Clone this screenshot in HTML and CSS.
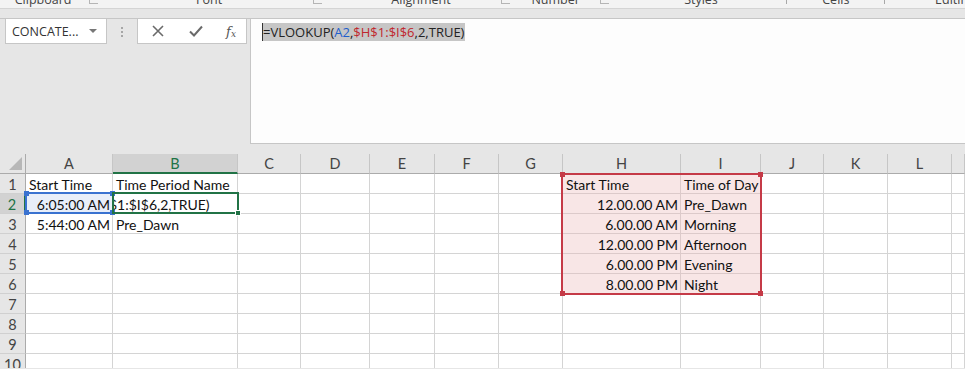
FILE: index.html
```html
<!DOCTYPE html>
<html lang="en">
<head>
	<meta charset="UTF-8">
	<title>Book1 - Excel</title>
	<link rel="stylesheet" href="styles.css">
</head>
<body>

	<!-- ribbon group labels (only the bottom edge shows) -->
	<div class="ribbon">
		<div class="grp g-clip"><span class="lbl">Clipboard</span><span class="launch"></span></div>
		<div class="grp g-font"><span class="lbl">Font</span><span class="launch"></span></div>
		<div class="grp g-align"><span class="lbl">Alignment</span><span class="launch"></span></div>
		<div class="grp g-num"><span class="lbl">Number</span><span class="launch"></span></div>
		<div class="grp g-styles sep"><span class="lbl">Styles</span></div>
		<div class="grp g-cells sep"><span class="lbl">Cells</span></div>
		<div class="grp g-edit"><span class="lbl">Editing</span></div>
	</div>
	<div class="band"></div>

	<!-- name box + formula bar -->
	<div class="fbar">
		<div class="namebox">
			<span>CONCATE...</span>
			<span class="arrow"></span>
		</div>
		<div class="dots"><i></i><i></i><i></i></div>
		<div class="fbtns">
			<svg width="14" height="14" viewBox="0 0 14 14"><path d="M2 2 L12 12 M12 2 L2 12" stroke="#6a6a6a" stroke-width="1.6" fill="none"/></svg>
			<svg width="16" height="14" viewBox="0 0 16 14"><path d="M2 7.5 L6 11.5 L14 2.5" stroke="#6a6a6a" stroke-width="2" fill="none"/></svg>
			<span class="fx">f<sub>x</sub></span>
		</div>
		<div class="finput">
			<div class="ftext">=VLOOKUP(<span class="blue">A2</span>,<span class="red">$H$1:$I$6</span>,2,TRUE)</div>
		</div>
	</div>

	<!-- worksheet -->
	<div class="sheet">
		<div class="grid">
			<div class="h corner"></div><div class="h">A</div><div class="h sel">B</div><div class="h">C</div><div class="h">D</div><div class="h">E</div><div class="h">F</div><div class="h">G</div><div class="h">H</div><div class="h">I</div><div class="h">J</div><div class="h">K</div><div class="h">L</div><div class="h"></div>

			<div class="rh">1</div><div class="c">Start Time</div><div class="c">Time Period Name</div><div class="c"></div><div class="c"></div><div class="c"></div><div class="c"></div><div class="c"></div><div class="c ref">Start Time</div><div class="c ref">Time of Day</div><div class="c"></div><div class="c"></div><div class="c"></div><div class="c"></div>

			<div class="rh sel">2</div><div class="c num a2">6:05:00 AM</div><div class="c edit"><span>$1:$I$6,2,TRUE)</span></div><div class="c"></div><div class="c"></div><div class="c"></div><div class="c"></div><div class="c"></div><div class="c ref num">12.00.00 AM</div><div class="c ref">Pre_Dawn</div><div class="c"></div><div class="c"></div><div class="c"></div><div class="c"></div>

			<div class="rh">3</div><div class="c num">5:44:00 AM</div><div class="c">Pre_Dawn</div><div class="c"></div><div class="c"></div><div class="c"></div><div class="c"></div><div class="c"></div><div class="c ref num">6.00.00 AM</div><div class="c ref">Morning</div><div class="c"></div><div class="c"></div><div class="c"></div><div class="c"></div>

			<div class="rh">4</div><div class="c"></div><div class="c"></div><div class="c"></div><div class="c"></div><div class="c"></div><div class="c"></div><div class="c"></div><div class="c ref num">12.00.00 PM</div><div class="c ref">Afternoon</div><div class="c"></div><div class="c"></div><div class="c"></div><div class="c"></div>

			<div class="rh">5</div><div class="c"></div><div class="c"></div><div class="c"></div><div class="c"></div><div class="c"></div><div class="c"></div><div class="c"></div><div class="c ref num">6.00.00 PM</div><div class="c ref">Evening</div><div class="c"></div><div class="c"></div><div class="c"></div><div class="c"></div>

			<div class="rh">6</div><div class="c"></div><div class="c"></div><div class="c"></div><div class="c"></div><div class="c"></div><div class="c"></div><div class="c"></div><div class="c ref num">8.00.00 PM</div><div class="c ref">Night</div><div class="c"></div><div class="c"></div><div class="c"></div><div class="c"></div>

			<div class="rh">7</div><div class="c"></div><div class="c"></div><div class="c"></div><div class="c"></div><div class="c"></div><div class="c"></div><div class="c"></div><div class="c"></div><div class="c"></div><div class="c"></div><div class="c"></div><div class="c"></div><div class="c"></div>

			<div class="rh">8</div><div class="c"></div><div class="c"></div><div class="c"></div><div class="c"></div><div class="c"></div><div class="c"></div><div class="c"></div><div class="c"></div><div class="c"></div><div class="c"></div><div class="c"></div><div class="c"></div><div class="c"></div>

			<div class="rh">9</div><div class="c"></div><div class="c"></div><div class="c"></div><div class="c"></div><div class="c"></div><div class="c"></div><div class="c"></div><div class="c"></div><div class="c"></div><div class="c"></div><div class="c"></div><div class="c"></div><div class="c"></div>

			<div class="rh">10</div><div class="c"></div><div class="c"></div><div class="c"></div><div class="c"></div><div class="c"></div><div class="c"></div><div class="c"></div><div class="c"></div><div class="c"></div><div class="c"></div><div class="c"></div><div class="c"></div><div class="c"></div>
		</div>

		<!-- reference highlights and active cell, drawn over the grid -->
		<div class="box box-blue"><i class="k tl"></i><i class="k tr"></i><i class="k bl"></i><i class="k br"></i></div>
		<div class="box box-green"><i class="fill"></i></div>
		<div class="box box-red"><i class="k tl"></i><i class="k tr"></i><i class="k bl"></i><i class="k br"></i></div>
	</div>

</body>
</html>
```

FILE: styles.css
```css
*{
	margin: 0;
	padding: 0;
	box-sizing: border-box;
}

body{
	width: 965px;
	height: 369px;
	overflow: hidden;
	background: #e6e6e6;
	font-family: "Open Sans", "Noto Sans", sans-serif;
}

/* ribbon strip */
.ribbon{
	height: 9px;
	background: #f3f3f3;
	border-bottom: 1px solid #d4d4d4;
	display: flex;
	overflow: hidden;
}

.grp{
	position: relative;
	display: flex;
	justify-content: center;
	font-size: 12.5px;
	color: #444;
	line-height: 16px;
	margin-top: -8px;
}

.g-clip{ width: 107px; }
.g-font{ width: 230px; }
.g-align{ width: 193px; }
.g-num{ width: 102px; }
.g-styles{ width: 176px; }
.g-cells{ width: 101px; }
.g-edit{ width: 80px; }

.g-font .lbl{ margin-left: -14px; }
.g-clip .lbl{ margin-left: -18px; }
.g-align .lbl{ margin-left: -2px; }
.g-num .lbl{ margin-left: -20px; }
.g-edit .lbl{ margin-left: 60px; }

.launch{
	position: absolute;
	right: 6px;
	bottom: 4px;
	width: 9px;
	height: 9px;
	border-left: 1px solid #b5b5b5;
	border-bottom: 1px solid #b5b5b5;
}

.sep::after{
	content: '';
	position: absolute;
	right: 0;
	bottom: 4px;
	width: 1px;
	height: 6px;
	background: #a8a8a8;
}

.band{
	height: 10px;
	border-bottom: 1px solid #c6c6c6;
}

/* formula bar */
.fbar{
	display: flex;
	align-items: flex-start;
	height: 135px;
}

.namebox{
	margin-left: 5px;
	width: 102px;
	height: 25px;
	background: #fff;
	border: 1px solid #c6c6c6;
	border-top: none;
	display: flex;
	align-items: center;
	padding-left: 6px;
	font-size: 12.5px;
	color: #333;
}

.arrow{
	margin-left: 11px;
	width: 0;
	height: 0;
	border-left: 4px solid transparent;
	border-right: 4px solid transparent;
	border-top: 4px solid #777;
}

.dots{
	width: 30px;
	height: 25px;
	display: flex;
	flex-direction: column;
	align-items: center;
	justify-content: center;
	gap: 2px;
}

.dots i{
	width: 2px;
	height: 2px;
	background: #a6a6a6;
}

.fbtns{
	width: 110px;
	height: 25px;
	background: #fff;
	border: 1px solid #c6c6c6;
	border-top: none;
	display: flex;
	align-items: center;
	justify-content: space-between;
	padding: 0 10px 0 13px;
}

.fx{
	font-family: "DejaVu Serif", serif;
	font-style: italic;
	font-size: 13px;
	color: #555;
}

.fx sub{
	font-size: 9px;
	vertical-align: -1px;
}

.finput{
	margin-left: 3px;
	flex: 1;
	height: 125px;
	background: #fdfdfd;
	border-left: 1px solid #c6c6c6;
	border-bottom: 1px solid #c6c6c6;
	padding: 4px 0 0 11px;
}

.ftext{
	width: fit-content;
	height: 18px;
	line-height: 18px;
	padding-right: 1px;
	background: #c6c6c6;
	border-left: 1px solid #333;
	font-size: 13px;
	color: #222;
}

.blue{ color: #1f5fcc; }
.red{ color: #c0272d; }

/* worksheet */
.sheet{
	position: relative;
	height: 214px;
	overflow: hidden;
	background: #fff;
}

.grid{
	display: grid;
	grid-template-columns: 26px 87px 125px 63px 69px 65px 64px 64px 118px 80px 63px 64px 64px 1fr;
	grid-auto-rows: 20px;
	font-family: "Lato", "Carlito", sans-serif;
}

.h{
	background: #e6e6e6;
	border-right: 1px solid #c6c6c6;
	border-bottom: 1px solid #ababab;
	text-align: center;
	font-size: 14.5px;
	line-height: 20px;
	color: #444;
}

.h.sel{
	background: #d2d2d2;
	border-bottom: 2px solid #217346;
	color: #217346;
}

.corner{
	position: relative;
	border-right-color: #ababab;
}

.corner::after{
	content: '';
	position: absolute;
	right: 3px;
	bottom: 3px;
	border-left: 13px solid transparent;
	border-bottom: 13px solid #b7b7b7;
}

.rh{
	background: #e6e6e6;
	border-right: 1px solid #ababab;
	border-bottom: 1px solid #d0d0d0;
	text-align: center;
	font-size: 14.5px;
	line-height: 21px;
	color: #444;
}

.rh.sel{
	background: #d2d2d2;
	border-right: 2px solid #217346;
	color: #217346;
}

.c{
	border-right: 1px solid #d4d4d4;
	border-bottom: 1px solid #d4d4d4;
	padding: 0 2px 0 3px;
	font-size: 14px;
	line-height: 21px;
	color: #111;
	white-space: nowrap;
	overflow: visible;
}

.c.num{
	text-align: right;
}

.c.ref{
	background: #f8e6e6;
	border-color: #dccaca;
}

.c.a2{
	background: #e8eef9;
}

.c.edit{
	overflow: hidden;
	padding-left: 0;
}

.c.edit span{
	margin-left: -4px;
}

/* overlay boxes */
.box{
	position: absolute;
	border: 2px solid;
}

.box-blue{
	left: 25px;
	top: 38px;
	width: 89px;
	height: 22px;
	border-color: #3a72d0;
}

.box-green{
	left: 112px;
	top: 38px;
	width: 127px;
	height: 22px;
	border-color: #217346;
}

.box-red{
	left: 561px;
	top: 19px;
	width: 201px;
	height: 122px;
	border-color: #c53a47;
}

.k{
	position: absolute;
	width: 5px;
	height: 5px;
}

.box-blue .k{ background: #3a72d0; }
.box-red .k{ background: #c53a47; }

.k.tl{ left: -3px; top: -3px; }
.k.tr{ right: -3px; top: -3px; }
.k.bl{ left: -3px; bottom: -3px; }
.k.br{ right: -3px; bottom: -3px; }

.fill{
	position: absolute;
	right: -4px;
	bottom: -4px;
	width: 6px;
	height: 6px;
	background: #217346;
	border: 1px solid #fff;
}
```
